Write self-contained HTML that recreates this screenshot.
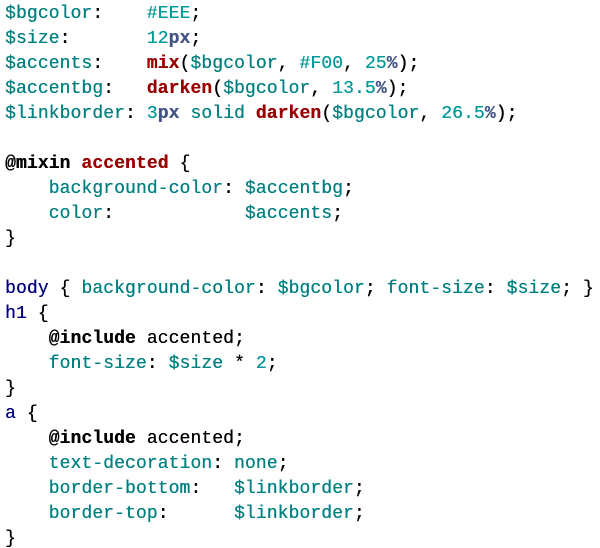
<!DOCTYPE html>
<html><head><style>
html,body{margin:0;padding:0;background:#fff;width:600px;height:548px;overflow:hidden}
pre{margin:0;padding:2px 0 0 5px;font-family:"Liberation Mono",monospace;font-size:18px;line-height:25px;letter-spacing:0.1px;color:#000;text-shadow:0.3px 0 0 currentColor}
.v{color:#008080}.n{color:#009999}.u{color:#445588;font-weight:bold}.f{color:#990000;font-weight:bold}.k{font-weight:bold;color:#000}.t{color:#000080}
</style></head><body><pre><span class="v">$bgcolor</span>:    <span class="n">#EEE</span>;
<span class="v">$size</span>:       <span class="n">12</span><span class="u">px</span>;
<span class="v">$accents</span>:    <span class="f">mix</span>(<span class="v">$bgcolor</span>, <span class="n">#F00</span>, <span class="n">25</span><span class="u">%</span>);
<span class="v">$accentbg</span>:   <span class="f">darken</span>(<span class="v">$bgcolor</span>, <span class="n">13.5</span><span class="u">%</span>);
<span class="v">$linkborder</span>: <span class="n">3</span><span class="u">px</span> <span class="v">solid</span> <span class="f">darken</span>(<span class="v">$bgcolor</span>, <span class="n">26.5</span><span class="u">%</span>);

<span class="k">@mixin</span> <span class="f">accented</span> {
    <span class="v">background-color</span>: <span class="v">$accentbg</span>;
    <span class="v">color</span>:            <span class="v">$accents</span>;
}

<span class="t">body</span> { <span class="v">background-color</span>: <span class="v">$bgcolor</span>; <span class="v">font-size</span>: <span class="v">$size</span>; }
<span class="t">h1</span> {
    <span class="k">@include</span> accented;
    <span class="v">font-size</span>: <span class="v">$size</span> * <span class="n">2</span>;
}
<span class="t">a</span> {
    <span class="k">@include</span> accented;
    <span class="v">text-decoration</span>: <span class="v">none</span>;
    <span class="v">border-bottom</span>:   <span class="v">$linkborder</span>;
    <span class="v">border-top</span>:      <span class="v">$linkborder</span>;
}</pre></body></html>
